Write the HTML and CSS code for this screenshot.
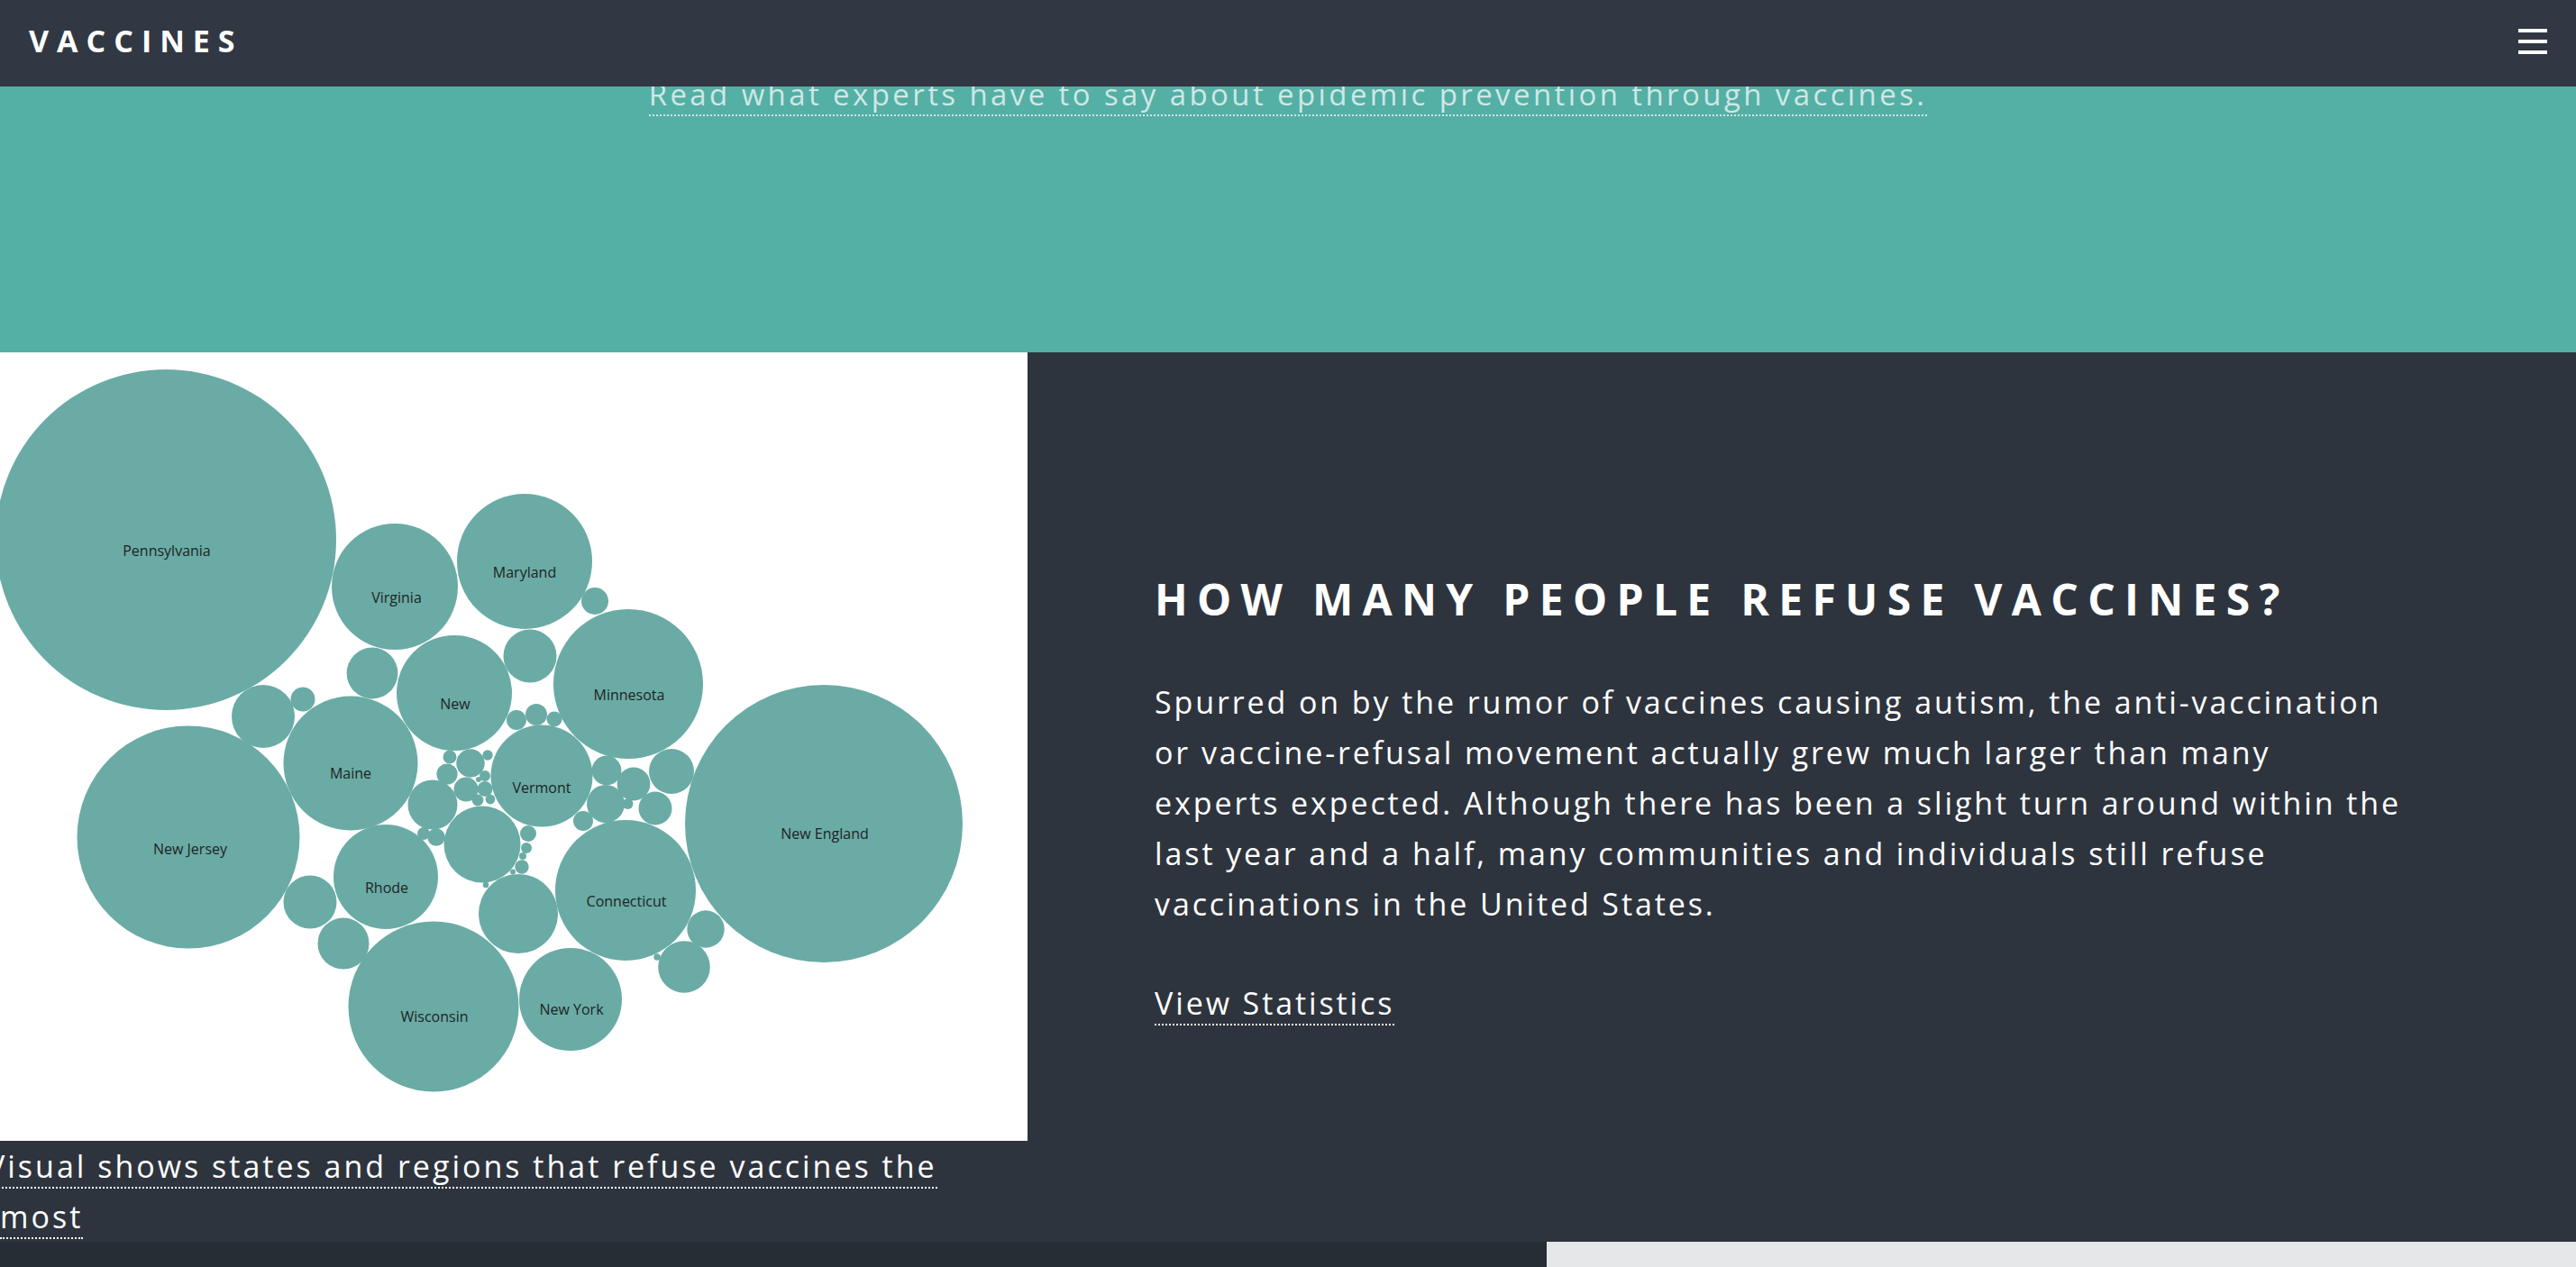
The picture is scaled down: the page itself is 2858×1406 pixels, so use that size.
FILE: index.html
```html
<!DOCTYPE html>
<html lang="en">
<head>
<meta charset="utf-8">
<title>Vaccines</title>
<link rel="stylesheet" href="styles.css">
</head>
<body>
<header class="topbar">
  <div class="brand">VACCINES</div>
  <button class="menu" aria-label="Menu"><span></span><span></span><span></span></button>
</header>
<main>
  <section class="hero">
    <p class="hero-text"><a class="dotted" href="#">Read what experts have to say about epidemic prevention through vaccines.</a></p>
  </section>
  <section class="split">
    <div class="visual">
      <div class="chart">
        <svg class="bubbles" width="1140" height="875" viewBox="0 0 1140 875">
          <g class="bubble">
            <circle cx="184" cy="208" r="189"/>
            <circle cx="438" cy="260" r="70"/>
            <circle cx="582" cy="232" r="75"/>
            <circle cx="660" cy="276" r="15"/>
            <circle cx="697" cy="368" r="83"/>
            <circle cx="588" cy="337" r="29.5"/>
            <circle cx="504" cy="378" r="64"/>
            <circle cx="413" cy="356" r="28.4"/>
            <circle cx="389" cy="456" r="74.5"/>
            <circle cx="292" cy="404" r="35"/>
            <circle cx="336" cy="385" r="13.5"/>
            <circle cx="209" cy="538" r="123.5"/>
            <circle cx="914" cy="523" r="154"/>
            <circle cx="601" cy="470" r="56.5"/>
            <circle cx="428" cy="582" r="58"/>
            <circle cx="481" cy="726" r="94.5"/>
            <circle cx="633" cy="718" r="57"/>
            <circle cx="694" cy="597" r="78"/>
            <circle cx="575" cy="623" r="44"/>
            <circle cx="535" cy="546" r="42.5"/>
            <circle cx="480" cy="502" r="27.5"/>
            <circle cx="344" cy="610" r="29.5"/>
            <circle cx="381" cy="656" r="28.5"/>
            <circle cx="783" cy="640" r="20.7"/>
            <circle cx="759" cy="682" r="28.8"/>
            <circle cx="673" cy="464" r="16.4"/>
            <circle cx="703" cy="479" r="18.4"/>
            <circle cx="745" cy="465" r="25"/>
            <circle cx="672" cy="501" r="21"/>
            <circle cx="727" cy="506" r="18.5"/>
            <circle cx="647" cy="520" r="11"/>
            <circle cx="696.5" cy="501" r="6"/>
            <circle cx="573" cy="408" r="11"/>
            <circle cx="595" cy="402" r="12"/>
            <circle cx="615" cy="407" r="8.5"/>
            <circle cx="522" cy="456" r="15.7"/>
            <circle cx="499" cy="449" r="7.5"/>
            <circle cx="496" cy="468" r="11.6"/>
            <circle cx="517" cy="485" r="13.5"/>
            <circle cx="541" cy="447" r="5.7"/>
            <circle cx="538" cy="470" r="6"/>
            <circle cx="538" cy="484.5" r="8.4"/>
            <circle cx="530" cy="497" r="6.4"/>
            <circle cx="544" cy="496" r="5.4"/>
            <circle cx="531" cy="474" r="3"/>
            <circle cx="586" cy="534" r="9"/>
            <circle cx="584" cy="550" r="6"/>
            <circle cx="580" cy="559" r="4"/>
            <circle cx="579" cy="571" r="7.7"/>
            <circle cx="569" cy="576.5" r="3"/>
            <circle cx="539" cy="591" r="3.3"/>
            <circle cx="470" cy="534" r="7"/>
            <circle cx="484" cy="538" r="9.8"/>
            <circle cx="729" cy="671" r="3.7"/>
          </g>
          <g class="labels">
            <text x="185" y="226">Pennsylvania</text>
            <text x="440" y="278">Virginia</text>
            <text x="582" y="250">Maryland</text>
            <text x="698" y="386">Minnesota</text>
            <text x="505" y="396">New</text>
            <text x="389" y="473">Maine</text>
            <text x="601" y="489">Vermont</text>
            <text x="211" y="557">New Jersey</text>
            <text x="915" y="540">New England</text>
            <text x="429" y="600">Rhode</text>
            <text x="695" y="615">Connecticut</text>
            <text x="482" y="743">Wisconsin</text>
            <text x="634" y="735">New York</text>
          </g>
        </svg>
      </div>
      <p class="caption"><a class="dotted" href="#">Visual shows states and regions that refuse vaccines the most</a></p>
    </div>
    <div class="info">
      <h2 class="info-title">HOW MANY PEOPLE REFUSE VACCINES?</h2>
      <p class="info-text">Spurred on by the rumor of vaccines causing autism, the anti-vaccination or vaccine-refusal movement actually grew much larger than many <span class="keep">experts expected.</span> Although there has been a slight turn around within the last year and a half, many communities and individuals still refuse vaccinations in the United States.</p>
      <div class="info-more"><a class="dotted" href="#">View Statistics</a></div>
    </div>
  </section>
  <div class="next">
    <div class="next-dark"></div>
    <div class="next-light"></div>
  </div>
</main>
</body>
</html>
```
FILE: styles.css
```css
* { box-sizing: border-box; }

html, body {
  margin: 0;
  padding: 0;
}

body {
  font-family: "Open Sans", "Noto Sans", "Liberation Sans", sans-serif;
  background: #2e343d;
  color: #fff;
  overflow: hidden;
}

.topbar {
  position: fixed;
  top: 0;
  left: 0;
  right: 0;
  height: 96px;
  background: #313843;
  display: flex;
  align-items: center;
  justify-content: space-between;
  padding: 0 32px;
  z-index: 10;
}

.brand {
  font-size: 34px;
  font-weight: 700;
  letter-spacing: 9px;
  line-height: 1;
  color: #fff;
  margin-bottom: 7px;
}

.menu {
  width: 32px;
  height: 28px;
  padding: 0;
  border: 0;
  background: transparent;
  display: flex;
  flex-direction: column;
  justify-content: space-between;
  margin-bottom: 4px;
}

.menu span {
  display: block;
  height: 4px;
  width: 32px;
  background: #fff;
}

.dotted {
  color: inherit;
  text-decoration: none;
  border-bottom: 2px dotted currentColor;
}

.hero {
  height: 391px;
  background: #54afa5;
  padding-top: 83px;
  text-align: center;
}

.hero-text {
  margin: 0;
  font-size: 33px;
  line-height: 44px;
  letter-spacing: 3.4px;
  color: rgba(255, 255, 255, 0.72);
}

.split {
  display: flex;
  background: #2e343d;
}

.visual {
  flex: none;
  width: 1140px;
}

.chart {
  height: 875px;
  background: #fff;
  overflow: hidden;
}

.bubbles {
  display: block;
}

.bubble circle {
  fill: #6aaba5;
}

.labels text {
  font-family: "Open Sans", "Noto Sans", sans-serif;
  font-size: 16px;
  fill: #1e2424;
  text-anchor: middle;
}

.caption {
  margin: 0;
  width: 1080px;
  text-indent: -15px;
  font-size: 34px;
  line-height: 56px;
  letter-spacing: 3px;
  color: #fff;
}

.info {
  flex: 1;
  display: flex;
  flex-direction: column;
  justify-content: center;
  padding: 8px 0 0 141px;
}

.info-title {
  margin: 0 0 58px;
  font-size: 48px;
  line-height: 57.6px;
  font-weight: 700;
  letter-spacing: 10.3px;
  color: #fff;
}

.info-text {
  margin: 0 0 54px;
  max-width: 1405px;
  font-size: 34px;
  line-height: 56px;
  letter-spacing: 2.9px;
  color: #fff;
}

.keep {
  white-space: nowrap;
}

.info-more {
  font-size: 34px;
  line-height: 56px;
  letter-spacing: 2.9px;
}

.next {
  display: flex;
  height: 28px;
}

.next-dark {
  width: 1716px;
  background: #272d35;
}

.next-light {
  flex: 1;
  background: #e6e7e9;
}
```
